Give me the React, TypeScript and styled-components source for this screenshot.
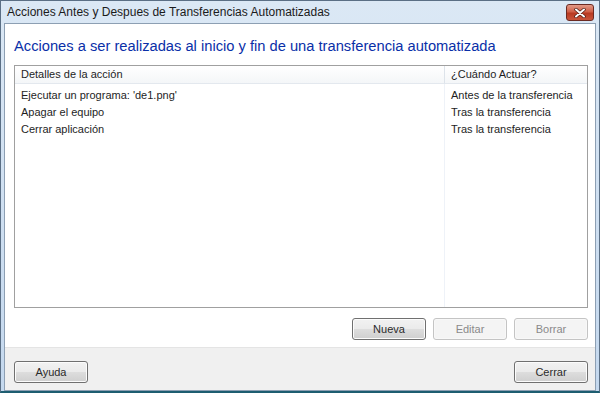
import * as React from "react";
import styled, {createGlobalStyle} from "styled-components";

const GlobalStyle = createGlobalStyle`
  html, body {
    margin: 0;
    padding: 0;
    background: #ffffff;
  }
  body {
    font-family: "Liberation Sans", Arial, sans-serif;
  }
`;

type Action = {
    detail: string;
    when: string;
};

const actions: Action[] = [
    {detail: "Ejecutar un programa: 'de1.png'", when: "Antes de la transferencia"},
    {detail: "Apagar el equipo", when: "Tras la transferencia"},
    {detail: "Cerrar aplicación", when: "Tras la transferencia"},
];

const Window = styled.div`
  width: 600px;
  height: 393px;
  box-sizing: border-box;
  display: flex;
  flex-direction: column;
  border: 1px solid #5b6f85;
  border-bottom: 2px solid #1d5d70;
  background: linear-gradient(#dbe8f5, #c4d8ee);
  padding: 0 3px 0 3px;
`;

const TitleBar = styled.div`
  height: 22px;
  flex-shrink: 0;
  display: flex;
  align-items: center;
  justify-content: space-between;
  padding: 0 2px 0 3px;
`;

const Title = styled.span`
  font-size: 12px;
  color: #1b1b1b;
`;

const CloseButton = styled.div`
  width: 26px;
  height: 15px;
  margin-top: 1px;
  border: 1px solid #6b2a22;
  border-radius: 3px;
  background: linear-gradient(#e39a88 0%, #d06048 45%, #b83a22 55%, #c9553b 100%);
  display: flex;
  align-items: center;
  justify-content: center;
`;

const Body = styled.div`
  flex: 1;
  display: flex;
  flex-direction: column;
  border: 1px solid #8d9fb3;
  background: #ffffff;
`;

const Content = styled.div`
  display: flex;
  flex-direction: column;
  padding: 12px 7px 0 9px;
`;

const Heading = styled.h1`
  margin: 0 0 9px 0;
  font-size: 14.7px;
  font-weight: normal;
  color: #0a2fa8;
  line-height: 20px;
`;

const ListView = styled.div`
  height: 243px;
  box-sizing: border-box;
  border: 1px solid #a0a0a0;
  display: grid;
  grid-template-columns: 430px 1fr;
  grid-template-rows: 18px 1fr;
  font-size: 11px;
  color: #1e1e1e;
`;

const HeaderCell = styled.div<{ $last?: boolean }>`
  padding: 2px 0 0 6px;
  background: linear-gradient(#ffffff, #f4f6f8);
  border-bottom: 1px solid #e3e8ee;
  border-right: ${p => (p.$last ? "none" : "1px solid #dde3ea")};
`;

const Column = styled.div<{ $last?: boolean }>`
  display: flex;
  flex-direction: column;
  padding-top: 3px;
  border-right: ${p => (p.$last ? "none" : "1px solid #eef2f8")};
`;

const Cell = styled.div`
  height: 17px;
  line-height: 17px;
  padding-left: 6px;
  white-space: nowrap;
`;

const ButtonRow = styled.div`
  display: flex;
  justify-content: flex-end;
  gap: 7px;
  padding: 10px 0 0 0;
`;

const Button = styled.button<{ $disabled?: boolean }>`
  width: 74px;
  height: 22px;
  box-sizing: border-box;
  padding: 0;
  font-family: "Liberation Sans", Arial, sans-serif;
  font-size: 11px;
  border-radius: 3px;
  border: 1px solid ${p => (p.$disabled ? "#c4c4c4" : "#707070")};
  color: ${p => (p.$disabled ? "#8a8a8a" : "#2a2a2a")};
  background: ${p =>
    p.$disabled
        ? "#f4f4f4"
        : "linear-gradient(#f2f2f2 0%, #ebebeb 48%, #dddddd 52%, #cfcfcf 100%)"};
  box-shadow: inset 0 0 0 1px ${p => (p.$disabled ? "#f8f8f8" : "#fcfcfc")};
`;

const Footer = styled.div`
  flex: 1;
  margin-top: 7px;
  box-sizing: border-box;
  display: flex;
  align-items: flex-start;
  justify-content: space-between;
  padding: 13px 7px 0 9px;
  background: #f0f0f0;
  border-top: 1px solid #e4e4e4;
`;

export default function App() {
    return (
        <>
            <GlobalStyle/>
            <Window>
                <TitleBar>
                    <Title>Acciones Antes y Despues de Transferencias Automatizadas</Title>
                    <CloseButton>
                        <svg width="12" height="10" viewBox="0 0 12 10">
                            <path d="M2 1.5 L10 8.5 M10 1.5 L2 8.5" stroke="#4a1a12" strokeWidth="3.4"
                                  strokeLinecap="round"/>
                            <path d="M2 1.5 L10 8.5 M10 1.5 L2 8.5" stroke="#ffffff" strokeWidth="2"
                                  strokeLinecap="round"/>
                        </svg>
                    </CloseButton>
                </TitleBar>
                <Body>
                    <Content>
                        <Heading>Acciones a ser realizadas al inicio y fin de una transferencia automatizada</Heading>
                        <ListView>
                            <HeaderCell>Detalles de la acción</HeaderCell>
                            <HeaderCell $last>¿Cuándo Actuar?</HeaderCell>
                            <Column>
                                {actions.map(a => <Cell key={a.detail}>{a.detail}</Cell>)}
                            </Column>
                            <Column $last>
                                {actions.map(a => <Cell key={a.detail}>{a.when}</Cell>)}
                            </Column>
                        </ListView>
                        <ButtonRow>
                            <Button>Nueva</Button>
                            <Button $disabled>Editar</Button>
                            <Button $disabled>Borrar</Button>
                        </ButtonRow>
                    </Content>
                    <Footer>
                        <Button>Ayuda</Button>
                        <Button>Cerrar</Button>
                    </Footer>
                </Body>
            </Window>
        </>
    );
}
